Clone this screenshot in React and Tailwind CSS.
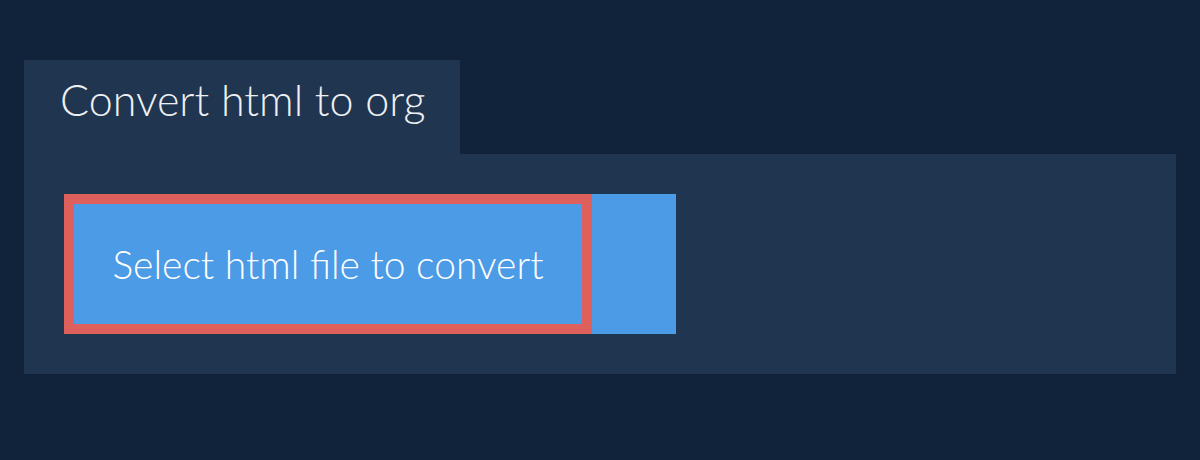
export default function App() {
  return (
    <div className="w-[1200px] h-[460px] bg-[#10233a] pt-[60px] px-[24px]" style={{ fontFamily: "Lato, 'Open Sans', sans-serif" }}>
      <div className="flex">
        <div className="h-[94px] bg-[#203550] pl-[36px] pr-[34px] pt-[16px] text-[43px] font-light leading-[48px] text-[#eef0f3]">
          Convert html to org
        </div>
      </div>
      <div className="bg-[#203550] p-[40px]">
        <div className="flex w-[612px] h-[140px] bg-[#4c9be6]">
          <div className="w-[528px] h-full border-[10px] border-[#de605d] flex items-center justify-center text-[39px] font-light text-white">
            Select html file to convert
          </div>
        </div>
      </div>
    </div>
  );
}
